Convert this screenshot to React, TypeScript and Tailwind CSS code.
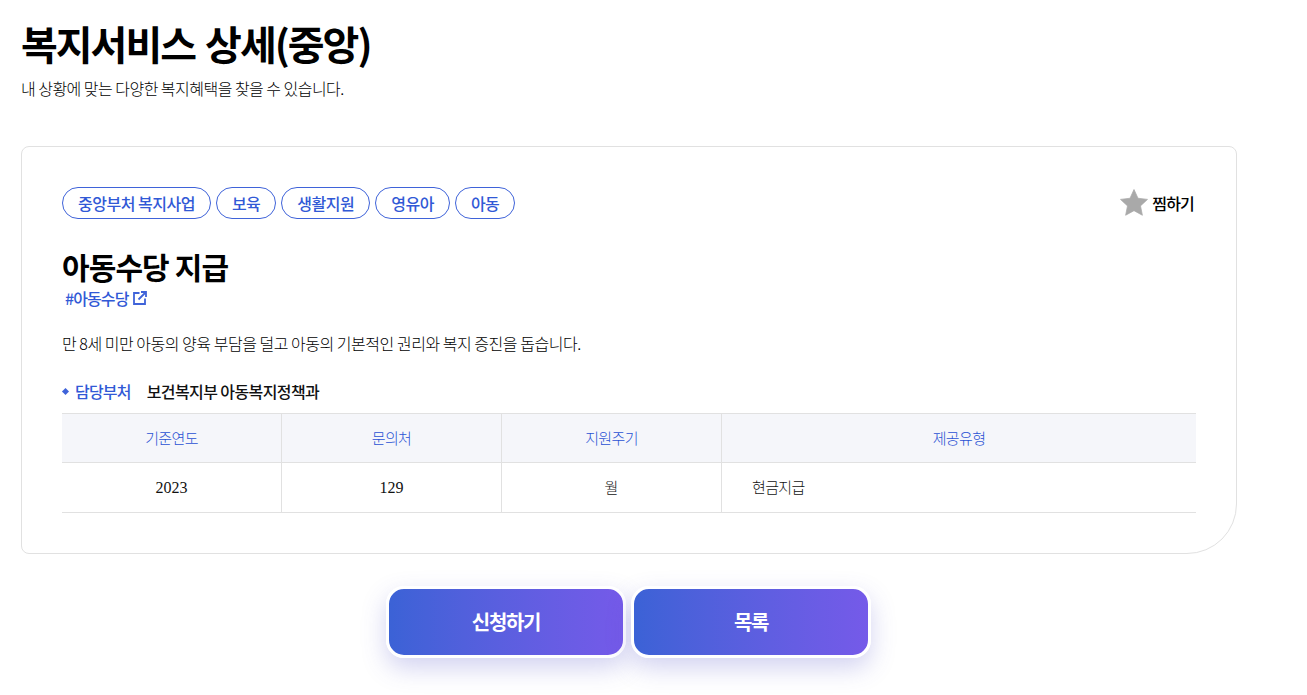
import React from "react";

const tags = ["중앙부처 복지사업", "보육", "생활지원", "영유아", "아동"];

export default function App() {
  return (
    <div className="w-[1307px] h-[695px] overflow-hidden bg-white pl-[21px] pt-[16px] text-[#222] font-['Noto_Sans_CJK_KR',sans-serif]">
      <h1 className="text-[40px] leading-[54px] font-bold text-[#000] tracking-[-2px] [word-spacing:3px]">복지서비스 상세(중앙)</h1>
      <p className="mt-[6px] text-[16px] leading-[24px] tracking-[-0.52px] font-light text-[#000]">내 상황에 맞는 다양한 복지혜택을 찾을 수 있습니다.</p>

      <section className="mt-[46px] w-[1216px] h-[408px] border border-[#e1e1e1] rounded-tl-[8px] rounded-tr-[8px] rounded-bl-[8px] rounded-br-[50px] px-[40px] pt-[40px]">
        <div className="flex items-center justify-between">
          <div className="flex gap-[5px]">
            {tags.map((t) => (
              <span key={t} className="h-[32px] px-[15px] flex items-center rounded-full border border-[#3f63d9] text-[#3159d6] text-[16px] font-medium tracking-[-0.5px]">{t}</span>
            ))}
          </div>
          <div className="flex items-center gap-[3px] pr-[2px]">
            <svg width="30" height="30" viewBox="0 0 24 24" className="block"><path d="M12 1.2l3.2 7 7.6.9-5.6 5.2 1.5 7.5L12 18.1l-6.7 3.7 1.5-7.5L1.2 9.1l7.6-.9z" fill="#a9a9a9" stroke="#a9a9a9" strokeWidth="0.6" strokeLinejoin="round" /></svg>
            <span className="text-[16px] font-medium tracking-[-0.8px] text-[#000]">찜하기</span>
          </div>
        </div>

        <h2 className="mt-[26px] text-[30px] leading-[42px] font-bold text-[#000] tracking-[-0.9px]">아동수당 지급</h2>
        <div className="ml-[3px] mt-[1px] flex items-center gap-[4px] text-[#3159d6] text-[16px] leading-[20px] font-medium tracking-[-0.9px]">
          <span>#아동수당</span>
          <svg width="14" height="14" viewBox="0 0 14 14" fill="none" stroke="#3f63d9" strokeWidth="1.8"><path d="M6.5 2H1v11h11V7.5" /><path d="M5.5 8.5L12.5 1.5M8 1h5v5" /></svg>
        </div>

        <p className="mt-[23px] text-[16px] leading-[24px] tracking-[-0.47px] font-light text-[#000]">만 8세 미만 아동의 양육 부담을 덜고 아동의 기본적인 권리와 복지 증진을 돕습니다.</p>

        <div className="mt-[24px] flex items-center h-[24px]">
          <span className="w-[5px] h-[5px] rotate-45 bg-[#3f63d9] ml-[1px] mr-[7px]" />
          <span className="text-[16px] font-medium text-[#3159d6] tracking-[-0.8px]">담당부처</span>
          <span className="ml-[16px] text-[16px] font-medium tracking-[-0.6px] text-[#111]">보건복지부 아동복지정책과</span>
        </div>

        <div className="mt-[10px] w-[1134px] border-y border-[#e1e1e1]">
          <div className="grid grid-cols-[220px_220px_220px_1fr] h-[49px] bg-[#f5f6fa] border-b border-[#e1e1e1] text-[15px] font-light text-[#2a52d4] tracking-[-0.65px]">
            {["기준연도", "문의처", "지원주기", "제공유형"].map((h, i) => (
              <div key={h} className={`flex items-center justify-center ${i < 3 ? "border-r border-[#e1e1e1]" : ""}`}>{h}</div>
            ))}
          </div>
          <div className="grid grid-cols-[220px_220px_220px_1fr] h-[49px] text-[15px] text-[#111]">
            <div className="flex items-center justify-center pt-[1px] border-r border-[#e1e1e1] text-[16px] font-['Liberation_Serif',serif]">2023</div>
            <div className="flex items-center justify-center pt-[1px] border-r border-[#e1e1e1] text-[16px] font-['Liberation_Serif',serif]">129</div>
            <div className="flex items-center justify-center border-r border-[#e1e1e1] font-light">월</div>
            <div className="flex items-center pl-[30px] font-light tracking-[-0.65px]">현금지급</div>
          </div>
        </div>
      </section>

      <div className="mt-[32px] w-[1215px] flex justify-center gap-[5px]">
        {["신청하기", "목록"].map((b) => (
          <button key={b} className="w-[240px] h-[72px] rounded-[18px] border-[3px] border-white bg-gradient-to-r from-[#3b62d6] to-[#755ae9] text-white text-[20px] font-bold tracking-[-1.3px] shadow-[0_10px_24px_rgba(80,80,200,0.25)]">{b}</button>
        ))}
      </div>
    </div>
  );
}
